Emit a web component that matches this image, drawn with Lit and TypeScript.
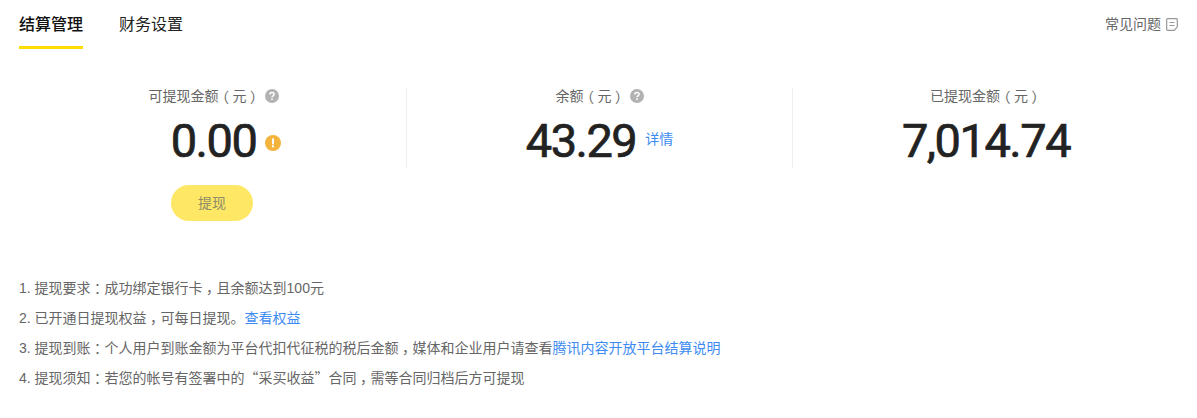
import { LitElement, html, css } from "lit";
import { customElement } from "lit/decorators.js";

const help = html`<svg class="ic" width="14" height="14" viewBox="0 0 14 14"><circle cx="7" cy="7" r="7" fill="#b2b2b2"/><path d="M4.900 5.400C4.900 4.200 5.800 3.500 7 3.500s2.100.7 2.100 1.800c0 1.500-2.100 1.600-2.100 3" fill="none" stroke="#fff" stroke-width="1.5"/><rect x="6.200" y="9.400" width="1.600" height="1.600" fill="#fff"/></svg>`;
const p = (c: string) => html`<span class="p">${c}</span>`;
const yuan = html`${p("（")}元${p("）")}`;
const comma = p("，");
const colon = p("：");

@customElement("app-root")
export class AppRoot extends LitElement {
  static styles = css`
    :host { display: block; width: 1197px; height: 418px; overflow: hidden; background: #fff; font-family: "Liberation Sans", "Noto Sans CJK SC", sans-serif; color: #333; }
    .tabs { display: flex; align-items: flex-start; padding: 0 19px; height: 88px; box-sizing: border-box; }
    .tab { font-size: 16px; line-height: 24px; padding-top: 13px; margin-right: 36px; color: #222; height: 49px; box-sizing: border-box; width: 64px; white-space: nowrap; }
    .tab.on { font-weight: 500; border-bottom: 3px solid #ffdc00; color: #111; }
    .faq { margin-left: auto; margin-right: 0; display: flex; align-items: center; gap: 5px; font-size: 14px; line-height: 20px; color: #666; padding-top: 14px; white-space: nowrap; }
    .stats { display: flex; padding-left: 21px; }
    .col { flex: none; width: 386px; box-sizing: border-box; height: 80px; border-right: 1px solid #eee; display: flex; flex-direction: column; align-items: center; }
    .col:last-child { border-right: none; }
    .label { display: flex; align-items: center; font-size: 14px; line-height: 16px; color: #666; white-space: nowrap; }
    .ic { margin-left: 4px; flex: none; }
    .numrow { display: flex; align-items: center; margin-top: 11px; }
    .num { position: relative; font-family: Roboto, "Liberation Sans", sans-serif; font-size: 47px; line-height: 52px; color: #222; -webkit-text-stroke: 0.7px #222; letter-spacing: -1.5px; white-space: nowrap; }
    .warn { position: absolute; left: 100%; top: 20px; margin-left: 9px; }
    .detail { font-size: 14px; color: #3d8bf2; margin-left: 9px; line-height: 20px; margin-top: -4px; white-space: nowrap; }
    .btnrow { width: 386px; margin: 17px 0 0 19px; display: flex; justify-content: center; }
    .btn { width: 82px; height: 36px; border-radius: 18px; background: #ffe766; color: #8c8c6a; font-size: 14px; line-height: 36px; text-align: center; }
    .notes { margin: 51px 0 0 19px; font-size: 14px; line-height: 30px; color: #666; white-space: nowrap; }
    .notes div { height: 30px; }
    .p { font-family: "Noto Sans CJK SC", sans-serif; font-feature-settings: "halt"; margin: 0 3.5px; }
    .q { font-family: "Noto Sans CJK SC", sans-serif; }
    a { color: #3d8bf2; text-decoration: none; }
  `;
  render() {
    return html`
      <div class="tabs">
        <div class="tab on">结算管理</div>
        <div class="tab">财务设置</div>
        <div class="faq">常见问题
          <svg width="12" height="13" viewBox="0 0 12 13"><path d="M1.500.7h9a.8.8 0 0 1 .8.8v7.300l-3 3.500H1.500a.8.8 0 0 1-.8-.8V1.500a.8.8 0 0 1 .8-.8z" fill="none" stroke="#999" stroke-width="1.2"/><path d="M3.500 4.500h5M3.500 7.500h5" stroke="#999" stroke-width="1.2"/></svg>
        </div>
      </div>
      <div class="stats">
        <div class="col">
          <div class="label">可提现金额${yuan}${help}</div>
          <div class="numrow"><div class="num">0.00<svg class="warn" width="16" height="16" viewBox="0 0 16 16"><circle cx="8" cy="8" r="8" fill="#f3b33d"/><rect x="7" y="3.500" width="2" height="5.800" fill="#fff"/><rect x="7" y="10.300" width="2" height="2" fill="#fff"/></svg></div></div>
        </div>
        <div class="col">
          <div class="label">余额${yuan}${help}</div>
          <div class="numrow"><div class="num">43.29</div><a class="detail" href="#">详情</a></div>
        </div>
        <div class="col">
          <div class="label">已提现金额${yuan}</div>
          <div class="numrow"><div class="num">7,014.74</div></div>
        </div>
      </div>
      <div class="btnrow"><div class="btn">提现</div></div>
      <div class="notes">
        <div>1. 提现要求${colon}成功绑定银行卡${comma}且余额达到100元</div>
        <div>2. 已开通日提现权益${comma}可每日提现。<a href="#">查看权益</a></div>
        <div>3. 提现到账${colon}个人用户到账金额为平台代扣代征税的税后金额${comma}媒体和企业用户请查看<a href="#">腾讯内容开放平台结算说明</a></div>
        <div>4. 提现须知${colon}若您的帐号有签署中的<span class="q">“采买收益”</span>合同${comma}需等合同归档后方可提现</div>
      </div>
    `;
  }
}
